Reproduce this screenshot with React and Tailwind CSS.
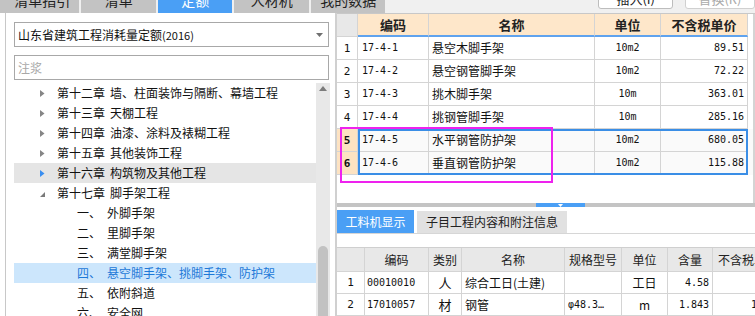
import React from 'react';

const CHAPTERS = [
  { code: '第十二章', name: '墙、柱面装饰与隔断、幕墙工程' },
  { code: '第十三章', name: '天棚工程' },
  { code: '第十四章', name: '油漆、涂料及裱糊工程' },
  { code: '第十五章', name: '其他装饰工程' },
  { code: '第十六章', name: '构筑物及其他工程', hover: true },
  { code: '第十七章', name: '脚手架工程', open: true },
];

const SECTIONS = [
  { no: '一、', name: '外脚手架' },
  { no: '二、', name: '里脚手架' },
  { no: '三、', name: '满堂脚手架' },
  { no: '四、', name: '悬空脚手架、挑脚手架、防护架', active: true },
  { no: '五、', name: '依附斜道' },
  { no: '六、', name: '安全网' },
];

const QUOTAS = [
  { n: '1', code: '17-4-1', name: '悬空木脚手架', unit: '10m2', price: '89.51' },
  { n: '2', code: '17-4-2', name: '悬空钢管脚手架', unit: '10m2', price: '72.22' },
  { n: '3', code: '17-4-3', name: '挑木脚手架', unit: '10m', price: '363.01' },
  { n: '4', code: '17-4-4', name: '挑钢管脚手架', unit: '10m', price: '285.16' },
  { n: '5', code: '17-4-5', name: '水平钢管防护架', unit: '10m2', price: '680.05', sel: true },
  { n: '6', code: '17-4-6', name: '垂直钢管防护架', unit: '10m2', price: '115.88', sel: true },
];

const MATERIALS = [
  { n: '1', code: '00010010', kind: '人', name: '综合工日(土建)', spec: '', unit: '工日', qty: '4.58', price: '' },
  { n: '2', code: '17010057', kind: '材', name: '钢管', spec: 'φ48.3…', unit: 'm', qty: '1.843', price: '13.50' },
];

const cjk = "font-['Noto_Sans_CJK_SC',sans-serif]";
const mono = "font-['DejaVu_Sans_Mono','Noto_Sans_CJK_SC',monospace]";
const line = 'border-r border-b border-[#d4d4d4]';

function Arrow({ open, hover }) {
  if (open) {
    return (
      <svg width="6" height="6" viewBox="0 0 6 6" className="mt-[3px]">
        <polygon points="5,0 5,5 0,5" fill="#7a7a7a" />
      </svg>
    );
  }
  return (
    <svg width="5" height="7" viewBox="0 0 5 7">
      <polygon points="0,0 4.5,3.5 0,7" fill={hover ? '#3a8ef0' : '#868686'} />
    </svg>
  );
}

function TopTabs() {
  return (
    <div className="h-[13px] overflow-hidden bg-[#f0f0f0]">
      <div className="flex h-[26px] -mt-[13px] gap-[2px] text-[14px]">
        <div className="w-[83px] pl-[5px] flex items-center justify-center bg-[#c3c3c3] text-[#222]">清单指引</div>
        <div className="w-[78px] flex items-center justify-center bg-[#c3c3c3] text-[#222]">清单</div>
        <div className="w-[78px] flex items-center justify-center bg-[#4a9ff5] text-white">定额</div>
        <div className="w-[78px] flex items-center justify-center bg-[#c3c3c3] text-[#222]">人材机</div>
        <div className="w-[78px] flex items-center justify-center bg-[#c3c3c3] text-[#222]">我的数据</div>
        <div className="ml-[211px] mt-auto mb-[5px] h-[22px] w-[78px] flex items-center justify-center bg-white border border-[#bdbdbd] rounded-b-[3px] text-[13px] text-[#222]">插入(I)</div>
        <div className="ml-[10px] mt-auto mb-[5px] h-[22px] w-[70px] shrink-0 flex items-center justify-center bg-white border border-[#d0d0d0] rounded-b-[3px] text-[13px] text-[#aaa]">替换(R)</div>
      </div>
    </div>
  );
}

function LeftPanel() {
  return (
    <div className="w-[337px] h-full flex flex-col ml-0 border-r-2 border-[#d0d0d0]">
      <div className="h-full ml-[5px] border-l border-[#c8c8c8] pl-[8px] flex flex-col">
        <div className="mt-[9px] h-[25px] w-[315px] border border-[#a8a8a8] flex items-center pl-[3px] pr-[5px]">
          <span className="flex-1">山东省建筑工程消耗量定额<span className="text-[11px]">(2016)</span></span>
          <svg width="7" height="4" viewBox="0 0 7 4">
            <polygon points="0,0 7,0 3.5,4" fill="#707070" />
          </svg>
        </div>
        <div className="mt-[8px] h-[25px] w-[315px] border border-[#a8a8a8] flex items-center pl-[3px] text-[#a8a8a8]">注浆</div>
        <div className="mt-[3px] flex flex-1 min-h-0">
          <div className="w-[302px]">
            {CHAPTERS.map(c => (
              <div key={c.code} className={`h-[20px] flex items-center pl-[26px] ${c.hover ? 'bg-[#e5e5e5]' : ''}`}>
                <div className="w-[17px] flex items-center">
                  <Arrow open={c.open} hover={c.hover} />
                </div>
                <span>{c.code}</span>
                <span className="ml-[5px]">{c.name}</span>
              </div>
            ))}
            {SECTIONS.map(s => (
              <div key={s.no} className={`h-[20px] flex items-center pl-[63px] ${s.active ? 'bg-[#cce6fc] text-[#1c78d8]' : ''}`}>
                <span>{s.no}</span>
                <span className="ml-[6px]">{s.name}</span>
              </div>
            ))}
          </div>
          <div className="w-[14px] bg-[#e8e8e8] flex flex-col items-center">
            <svg width="8" height="5" viewBox="0 0 8 5" className="mt-[3px]">
              <polygon points="0,5 8,5 4,0" fill="#7c7c7c" />
            </svg>
            <div className="mt-[155px] w-[10px] flex-1 bg-[#c2c2c2] rounded-t-full" />
          </div>
        </div>
      </div>
    </div>
  );
}

function QuotaTable() {
  return (
    <div className="h-[193px] border-r-2 border-[#d4d4d4] w-[418px]">
      <div className="flex h-[23px] font-bold text-[13px] text-[#222]">
        <div className={`w-[21px] bg-[#e8e8e8] ${line}`} />
        <div className="w-[71px] bg-[#fee7ca] border-r border-[#d4d4d4] border-b-2 border-b-[#5fa3ee] flex items-center justify-center">编码</div>
        <div className="w-[166px] bg-[#fee7ca] border-r border-[#d4d4d4] border-b-2 border-b-[#5fa3ee] flex items-center justify-center">名称</div>
        <div className="w-[66px] bg-[#fee7ca] border-r border-[#d4d4d4] border-b-2 border-b-[#5fa3ee] flex items-center justify-center">单位</div>
        <div className="w-[87px] bg-[#fee7ca] border-r border-[#d4d4d4] border-b-2 border-b-[#5fa3ee] flex items-center justify-center">不含税单价</div>
      </div>
      {QUOTAS.map(r => (
        <div key={r.n} className={`flex h-[23px] ${r.sel ? 'bg-[#fafafa]' : ''}`}>
          <div className={`w-[21px] ${line} flex items-center justify-center ${mono} text-[11px] ${r.sel ? 'bg-[#fde3c2] font-bold' : 'bg-white'}`}>{r.n}</div>
          <div className={`w-[71px] ${line} flex items-center pl-[4px] ${mono} text-[10px]`}>{r.code}</div>
          <div className={`w-[166px] ${line} flex items-center pl-[3px]`}>{r.name}</div>
          <div className={`w-[66px] ${line} flex items-center justify-center ${mono} text-[10px]`}>{r.unit}</div>
          <div className={`w-[87px] ${line} flex items-center justify-end pr-[3px] ${mono} text-[10px]`}>{r.price}</div>
        </div>
      ))}
    </div>
  );
}

function MaterialTable() {
  return (
    <div className="border-t border-[#cfcfcf] w-[460px]">
      <div className="flex h-[24px] bg-[#e8e8e8] text-[#222]">
        <div className={`w-[28px] ${line}`} />
        <div className={`w-[64px] ${line} flex items-center justify-center`}>编码</div>
        <div className={`w-[33px] ${line} flex items-center justify-center`}>类别</div>
        <div className={`w-[103px] ${line} flex items-center justify-center`}>名称</div>
        <div className={`w-[57px] ${line} flex items-center justify-center`}>规格型号</div>
        <div className={`w-[46px] ${line} flex items-center justify-center`}>单位</div>
        <div className={`w-[45px] ${line} flex items-center justify-center`}>含量</div>
        <div className={`w-[72px] ${line} flex items-center pl-[5px]`}>不含税单价</div>
      </div>
      {MATERIALS.map(r => (
        <div key={r.n} className="flex h-[22px]">
          <div className={`w-[28px] ${line} flex items-center justify-center ${mono} text-[11px]`}>{r.n}</div>
          <div className={`w-[64px] ${line} flex items-center pl-[2px] ${mono} text-[10px]`}>{r.code}</div>
          <div className={`w-[33px] ${line} flex items-center justify-center text-[13px]`}>{r.kind}</div>
          <div className={`w-[103px] ${line} flex items-center pl-[3px]`}>{r.name}</div>
          <div className={`w-[57px] ${line} flex items-center pl-[3px] ${mono} text-[10px]`}>{r.spec}</div>
          <div className={`w-[46px] ${line} flex items-center justify-center`}>{r.unit}</div>
          <div className={`w-[45px] ${line} flex items-center justify-end pr-[3px] ${mono} text-[10px]`}>{r.qty}</div>
          <div className={`w-[72px] ${line} flex items-center justify-end pr-[3px] ${mono} text-[10px]`}>{r.price}</div>
        </div>
      ))}
    </div>
  );
}

function RightPanel() {
  return (
    <div className="w-[418px] h-full flex flex-col border-t border-[#c8c8c8] overflow-hidden">
      <QuotaTable />
      <div className="h-[4px] bg-[#c4c4c4] flex">
        <div className="ml-[199px] w-[49px] bg-[#4a9ff5] flex justify-center">
          <svg width="5" height="3" viewBox="0 0 5 3" className="mt-[1px]">
            <polygon points="0,0 5,0 2.5,3" fill="#fff" />
          </svg>
        </div>
      </div>
      <div className="mt-[3px] h-[24px] flex gap-[3px] border-b border-[#d6d6d6]">
        <div className="w-[77px] bg-[#4a9ff5] text-white flex items-center justify-center">工料机显示</div>
        <div className="w-[150px] mt-[1px] bg-[#e1e1e1] text-[#222] flex items-center justify-center">子目工程内容和附注信息</div>
      </div>
      <div className="mt-[13px]">
        <MaterialTable />
      </div>
    </div>
  );
}

export default function App() {
  return (
    <div className={`relative w-[755px] h-[316px] overflow-hidden bg-white text-[12px] leading-none text-[#111] ${cjk}`}>
      <TopTabs />
      <div className="flex h-[303px]">
        <LeftPanel />
        <RightPanel />
      </div>
      {/* selection outline + magenta annotation */}
      <div className="absolute left-[358px] top-[129px] w-[390px] h-[46px] border-2 border-[#3a8ee6] pointer-events-none" />
      <div className="absolute left-[340px] top-[127px] w-[213px] h-[56px] border-2 border-[#ee22ee] pointer-events-none" />
    </div>
  );
}
